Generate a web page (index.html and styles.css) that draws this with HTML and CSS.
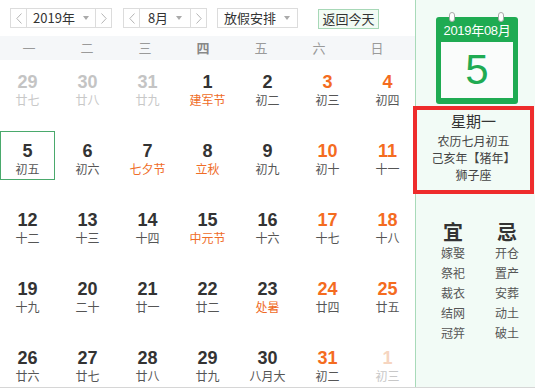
FILE: index.html
```html
<!DOCTYPE html>
<html lang="zh">
<head>
<meta charset="utf-8">
<link rel="stylesheet" href="styles.css">
</head>
<body>
<div class="app">
  <div class="main">
    <div class="toolbar">
      <div class="sel sel-year">
        <span class="arr arr-l"><svg width="6" height="11" viewBox="0 0 6 11"><polyline points="5.5,0.5 0.8,5.5 5.5,10.5" fill="none" stroke="#b5b5b5" stroke-width="1"/></svg></span>
        <span class="val">2019年<i class="caret"></i></span>
        <span class="arr arr-r"><svg width="6" height="11" viewBox="0 0 6 11"><polyline points="0.5,0.5 5.2,5.5 0.5,10.5" fill="none" stroke="#b5b5b5" stroke-width="1"/></svg></span>
      </div>
      <div class="sel sel-month">
        <span class="arr arr-l"><svg width="6" height="11" viewBox="0 0 6 11"><polyline points="5.5,0.5 0.8,5.5 5.5,10.5" fill="none" stroke="#b5b5b5" stroke-width="1"/></svg></span>
        <span class="val">8月<i class="caret"></i></span>
        <span class="arr arr-r"><svg width="6" height="11" viewBox="0 0 6 11"><polyline points="0.5,0.5 5.2,5.5 0.5,10.5" fill="none" stroke="#b5b5b5" stroke-width="1"/></svg></span>
      </div>
      <div class="sel sel-holiday"><span class="val">放假安排<i class="caret"></i></span></div>
      <div class="today-btn">返回今天</div>
    </div>
    <div class="weekhead">
      <span>一</span><span>二</span><span>三</span><span class="bold">四</span><span>五</span><span>六</span><span>日</span>
    </div>
    <div class="grid">
      <div class="cell other"><div class="n">29</div><div class="l">廿七</div></div>
      <div class="cell other"><div class="n">30</div><div class="l">廿八</div></div>
      <div class="cell other"><div class="n">31</div><div class="l">廿九</div></div>
      <div class="cell"><div class="n">1</div><div class="l fest">建军节</div></div>
      <div class="cell"><div class="n">2</div><div class="l">初二</div></div>
      <div class="cell wkd"><div class="n">3</div><div class="l">初三</div></div>
      <div class="cell wkd"><div class="n">4</div><div class="l">初四</div></div>

      <div class="cell sel-day"><div class="n">5</div><div class="l">初五</div></div>
      <div class="cell"><div class="n">6</div><div class="l">初六</div></div>
      <div class="cell"><div class="n">7</div><div class="l fest">七夕节</div></div>
      <div class="cell"><div class="n">8</div><div class="l fest">立秋</div></div>
      <div class="cell"><div class="n">9</div><div class="l">初九</div></div>
      <div class="cell wkd"><div class="n">10</div><div class="l">初十</div></div>
      <div class="cell wkd"><div class="n">11</div><div class="l">十一</div></div>

      <div class="cell"><div class="n">12</div><div class="l">十二</div></div>
      <div class="cell"><div class="n">13</div><div class="l">十三</div></div>
      <div class="cell"><div class="n">14</div><div class="l">十四</div></div>
      <div class="cell"><div class="n">15</div><div class="l fest">中元节</div></div>
      <div class="cell"><div class="n">16</div><div class="l">十六</div></div>
      <div class="cell wkd"><div class="n">17</div><div class="l">十七</div></div>
      <div class="cell wkd"><div class="n">18</div><div class="l">十八</div></div>

      <div class="cell"><div class="n">19</div><div class="l">十九</div></div>
      <div class="cell"><div class="n">20</div><div class="l">二十</div></div>
      <div class="cell"><div class="n">21</div><div class="l">廿一</div></div>
      <div class="cell"><div class="n">22</div><div class="l">廿二</div></div>
      <div class="cell"><div class="n">23</div><div class="l fest">处暑</div></div>
      <div class="cell wkd"><div class="n">24</div><div class="l">廿四</div></div>
      <div class="cell wkd"><div class="n">25</div><div class="l">廿五</div></div>

      <div class="cell"><div class="n">26</div><div class="l">廿六</div></div>
      <div class="cell"><div class="n">27</div><div class="l">廿七</div></div>
      <div class="cell"><div class="n">28</div><div class="l">廿八</div></div>
      <div class="cell"><div class="n">29</div><div class="l">廿九</div></div>
      <div class="cell"><div class="n">30</div><div class="l">八月大</div></div>
      <div class="cell wkd"><div class="n">31</div><div class="l">初二</div></div>
      <div class="cell next"><div class="n">1</div><div class="l">初三</div></div>
    </div>
  </div>
  <div class="side">
    <div class="cal-icon">
      <span class="ring ring-l"></span><span class="ring ring-r"></span>
      <div class="cal-head">2019年08月</div>
      <div class="cal-body">5</div>
    </div>
    <div class="info">
      <div class="wk">星期一</div>
      <div class="ln">农历七月初五</div>
      <div class="ln">己亥年【猪年】</div>
      <div class="ln">狮子座</div>
    </div>
    <div class="yiji">
      <div class="col">
        <div class="yj-title">宜</div>
        <div class="yj-item">嫁娶</div>
        <div class="yj-item">祭祀</div>
        <div class="yj-item">裁衣</div>
        <div class="yj-item">结网</div>
        <div class="yj-item">冠笄</div>
      </div>
      <div class="col">
        <div class="yj-title">忌</div>
        <div class="yj-item">开仓</div>
        <div class="yj-item">置产</div>
        <div class="yj-item">安葬</div>
        <div class="yj-item">动土</div>
        <div class="yj-item">破土</div>
      </div>
    </div>
  </div>
</div>
</body>
</html>
```
FILE: styles.css
```css
* { box-sizing: border-box; }
html, body { margin: 0; padding: 0; background: #fff; }
body {
  font-family: "Noto Sans CJK SC", "Liberation Sans", sans-serif;
  color: #333;
  width: 535px;
  height: 390px;
  overflow: hidden;
}
.app {
  display: flex;
  width: 535px;
  height: 388px;
  border-bottom: 1px solid #d6d6d6;
}
.main {
  width: 415px;
  height: 387px;
}
.toolbar {
  display: flex;
  align-items: flex-start;
  padding: 8px 0 0 10px;
  height: 28px;
}
.sel {
  display: flex;
  height: 20px;
  border: 1px solid #dcdcdc;
  background: #fff;
  font-size: 13px;
  line-height: 18px;
}
.sel-year { width: 102px; }
.sel-month { width: 84px; margin-left: 11px; }
.sel-holiday { width: 81px; margin-left: 10px; }
.arr {
  display: flex;
  align-items: center;
  justify-content: center;
  width: 16px;
  flex: none;
}
.arr-l { border-right: 1px solid #dcdcdc; }
.arr-r { border-left: 1px solid #dcdcdc; }
.val {
  flex: 1;
  display: flex;
  align-items: center;
  justify-content: center;
  white-space: nowrap;
}
.sel-holiday .val { justify-content: flex-start; padding-left: 6px; }
.caret {
  display: inline-block;
  width: 0;
  height: 0;
  border-left: 3px solid transparent;
  border-right: 3px solid transparent;
  border-top: 4px solid #aaa;
  margin-left: 8px;
}
.today-btn {
  margin-left: 20px;
  margin-top: 1px;
  width: 61px;
  height: 20px;
  border: 1px solid #a7d8b7;
  background: #f2fbf5;
  font-size: 13px;
  line-height: 18px;
  text-align: center;
}
.weekhead {
  margin-top: 8px;
  height: 24px;
  background: #f5f7f9;
  display: grid;
  grid-template-columns: repeat(7, 58px);
  font-size: 13px;
  line-height: 24px;
  color: #9a9a9a;
  text-align: center;
}
.weekhead .bold { font-weight: bold; color: #888; }
.grid {
  margin-top: 2px;
  display: grid;
  grid-template-columns: repeat(7, 55px);
  grid-auto-rows: 49px;
  column-gap: 5px;
  row-gap: 20px;
}
.cell {
  text-align: center;
  padding-top: 10px;
}
.cell .n {
  font-family: "Liberation Sans", Arial, sans-serif;
  font-weight: bold;
  font-size: 18px;
  line-height: 20px;
  color: #333;
}
.cell .l {
  font-size: 12px;
  line-height: 16px;
  color: #555;
}
.cell.wkd .n { color: #f46c1f; }
.cell .l.fest { color: #ef6c27; }
.cell.other .n { color: #c4c4c4; }
.cell.other .l { color: #c8c8c8; }
.cell.next .n { color: #f6d5c0; }
.cell.next .l { color: #c8c8c8; }
.cell.sel-day {
  border: 1px solid #4aa96c;
  padding-top: 9px;
}
.side {
  width: 120px;
  height: 387px;
  border-left: 1px solid #a8dab9;
  background: #f2fbf6;
}
.cal-icon {
  position: relative;
  width: 82px;
  margin: 17px 0 0 20px;
  background: #1fab52;
  border-radius: 3px;
  padding: 0 5px 6px;
}
.ring {
  position: absolute;
  top: -5px;
  width: 6px;
  height: 10px;
  border: 1px solid #aaa;
  border-radius: 3px;
  background: #fff;
}
.ring-l { left: 13px; }
.ring-r { left: 62px; }
.cal-head {
  height: 25px;
  line-height: 27px;
  text-align: center;
  color: #fff;
  font-family: "Liberation Sans", "Noto Sans CJK SC", sans-serif;
  font-size: 13px;
  letter-spacing: -0.3px;
  white-space: nowrap;
}
.cal-body {
  height: 56px;
  background: #fafcfb;
  text-align: center;
  font-family: "Liberation Sans", Arial, sans-serif;
  font-size: 42px;
  line-height: 56px;
  color: #1fab52;
}
.info {
  margin: 2px 0 0 -3px;
  width: 121px;
  height: 88px;
  border: 4px solid #ee2c2c;
  text-align: center;
  padding-top: 2px;
}
.info .wk {
  font-size: 15px;
  line-height: 18px;
  color: #333;
  margin-bottom: 2px;
}
.info .ln {
  font-size: 12px;
  line-height: 17px;
  color: #444;
  white-space: nowrap;
}
.yiji {
  margin-top: 26px;
  display: flex;
  justify-content: center;
  gap: 14px;
  padding-left: 9px;
}
.yiji .col {
  width: 40px;
  text-align: center;
}
.yj-title {
  font-size: 20px;
  line-height: 23px;
  font-weight: bold;
  color: #333;
}
.yj-item {
  font-size: 12px;
  line-height: 20px;
  color: #555;
}
```
